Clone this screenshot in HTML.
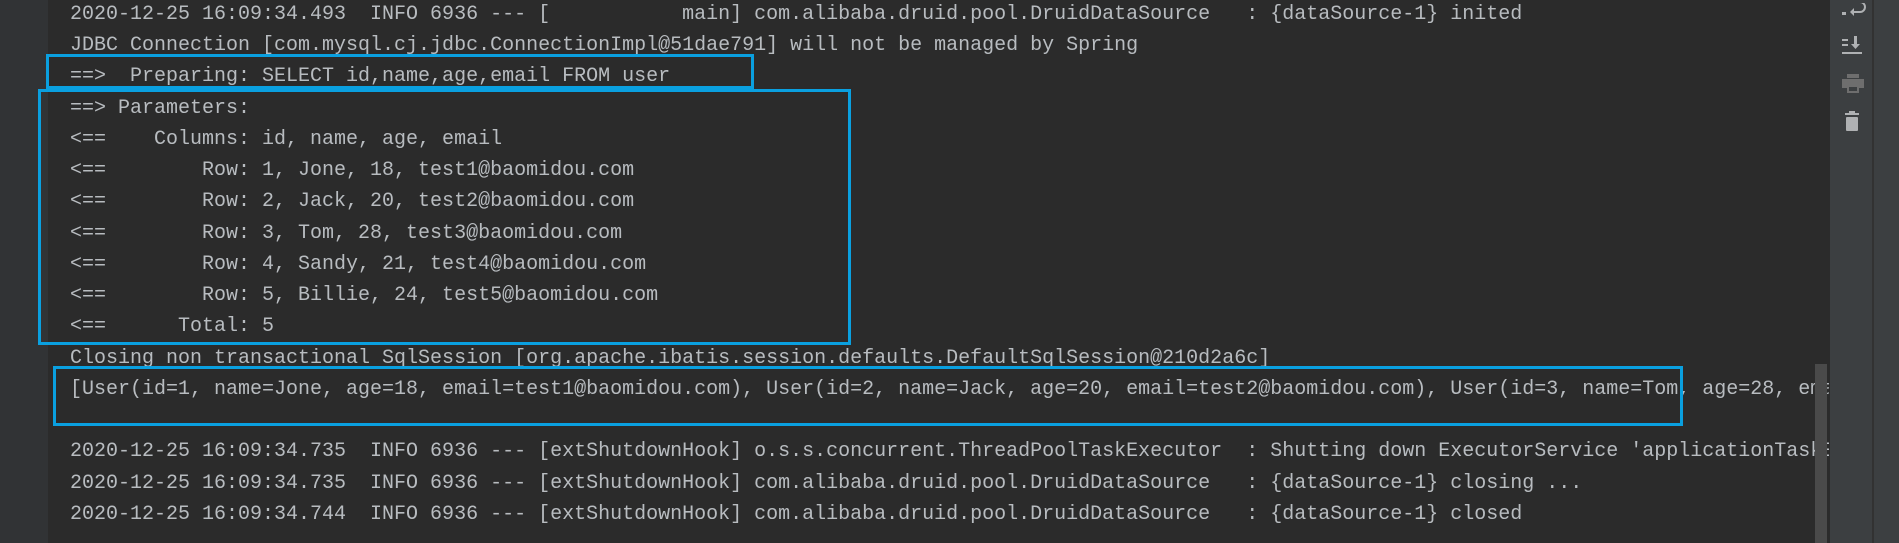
<!DOCTYPE html>
<html><head><meta charset="utf-8"><style>
html,body{margin:0;padding:0;width:1899px;height:543px;overflow:hidden;background:#2b2b2b;}
.gutter{position:absolute;left:0;top:0;width:48px;height:543px;background:#313335;}
.ed{position:absolute;left:48px;top:0;width:1781px;height:543px;overflow:hidden;background:#2b2b2b;}
pre{position:absolute;left:22px;top:-1.2px;margin:0;font-family:"Liberation Mono",monospace;font-size:20px;line-height:31.25px;color:#b8bcc0;white-space:pre;}
.box{position:absolute;border:3px solid #0aa0e0;box-sizing:border-box;}
.thumb{position:absolute;left:1815px;top:364px;width:12px;height:179px;background:#4a4a4a;}
.tb{position:absolute;left:1830px;top:0;width:42px;height:543px;background:#3c3f41;}
.sep{position:absolute;left:1872px;top:0;width:2px;height:543px;background:#323232;}
.rt{position:absolute;left:1874px;top:0;width:25px;height:543px;background:#3c3f41;}
svg{position:absolute;}
</style></head><body>
<div class="gutter"></div>
<div class="ed"><pre>2020-12-25 16:09:34.493  INFO 6936 --- [           main] com.alibaba.druid.pool.DruidDataSource   : {dataSource-1} inited
JDBC Connection [com.mysql.cj.jdbc.ConnectionImpl@51dae791] will not be managed by Spring
==>  Preparing: SELECT id,name,age,email FROM user
==> Parameters: 
&lt;==    Columns: id, name, age, email
&lt;==        Row: 1, Jone, 18, test1@baomidou.com
&lt;==        Row: 2, Jack, 20, test2@baomidou.com
&lt;==        Row: 3, Tom, 28, test3@baomidou.com
&lt;==        Row: 4, Sandy, 21, test4@baomidou.com
&lt;==        Row: 5, Billie, 24, test5@baomidou.com
&lt;==      Total: 5
Closing non transactional SqlSession [org.apache.ibatis.session.defaults.DefaultSqlSession@210d2a6c]
[User(id=1, name=Jone, age=18, email=test1@baomidou.com), User(id=2, name=Jack, age=20, email=test2@baomidou.com), User(id=3, name=Tom, age=28, email=test3@baomidou.com)]

2020-12-25 16:09:34.735  INFO 6936 --- [extShutdownHook] o.s.s.concurrent.ThreadPoolTaskExecutor  : Shutting down ExecutorService 'applicationTaskExecutor'
2020-12-25 16:09:34.735  INFO 6936 --- [extShutdownHook] com.alibaba.druid.pool.DruidDataSource   : {dataSource-1} closing ...
2020-12-25 16:09:34.744  INFO 6936 --- [extShutdownHook] com.alibaba.druid.pool.DruidDataSource   : {dataSource-1} closed</pre></div>
<div class="box" style="left:46px;top:54px;width:708px;height:35px;"></div>
<div class="box" style="left:38px;top:89px;width:813px;height:256px;"></div>
<div class="box" style="left:53px;top:366px;width:1630px;height:60px;"></div>
<div class="thumb"></div>
<div class="tb"></div><div class="sep"></div><div class="rt"></div>
<svg width="30" height="150" style="left:1837px;top:3px" viewBox="0 0 30 150">
 <g fill="#afb1b3">
  <rect x="5" y="9" width="4" height="3"/><path d="M11 0h12a4 4 0 0 1 0 8h-6v-3l-4 4 4 4v-3h6a6 6 0 0 0 0-12H11z"/>
  <rect x="5" y="36" width="6" height="2"/><rect x="5" y="41" width="6" height="2"/><rect x="5" y="49" width="20" height="2"/>
  <path d="M17 33h3v8h3l-4.5 5-4.5-5h3z"/>
  <rect x="10" y="71" width="12" height="4" fill="#6e6e6e"/><rect x="5" y="76" width="22" height="9" fill="#6e6e6e"/><rect x="10" y="83" width="12" height="7" fill="#6e6e6e"/><rect x="12" y="84" width="8" height="4" fill="#3c3f41"/>
  <rect x="8" y="110" width="14" height="2"/><rect x="12" y="108" width="6" height="2"/><rect x="9" y="114" width="12" height="14" rx="1"/>
 </g>
</svg>
</body></html>
